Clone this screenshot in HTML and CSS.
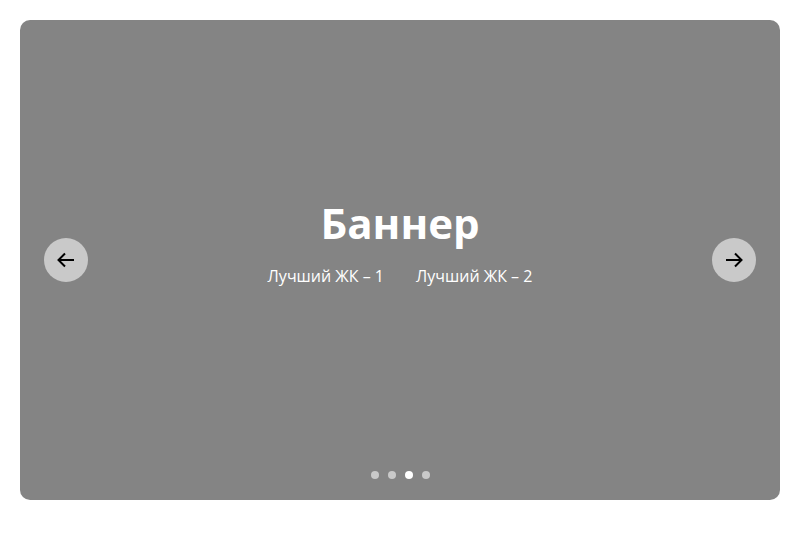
FILE: index.html
```html
<!DOCTYPE html>
<html lang="ru">
<head>
<meta charset="utf-8">
<link rel="stylesheet" href="styles.css">
</head>
<body>
<div class="page">
  <section class="banner">
    <button class="nav nav-prev" aria-label="Назад">
      <svg width="20" height="20" viewBox="0 0 20 20"><path d="M18 10H2.5M9 3.5L2.5 10L9 16.5" fill="none" stroke="#000" stroke-width="2"/></svg>
    </button>
    <div class="content">
      <h1 class="title">Баннер</h1>
      <div class="links">
        <span class="link">Лучший ЖК – 1</span>
        <span class="link">Лучший ЖК – 2</span>
      </div>
    </div>
    <button class="nav nav-next" aria-label="Вперёд">
      <svg width="20" height="20" viewBox="0 0 20 20"><path d="M2 10H17.5M11 3.5L17.5 10L11 16.5" fill="none" stroke="#000" stroke-width="2"/></svg>
    </button>
    <div class="dots">
      <span class="dot"></span>
      <span class="dot"></span>
      <span class="dot active"></span>
      <span class="dot"></span>
    </div>
  </section>
</div>
</body>
</html>
```
FILE: styles.css
```css
html, body {
  margin: 0;
  padding: 0;
  background: #fff;
}
body {
  font-family: "Open Sans", "Noto Sans", sans-serif;
}
.page {
  padding: 20px;
}
.banner {
  position: relative;
  height: 480px;
  background: #848484;
  border-radius: 10px;
  display: flex;
  align-items: center;
  justify-content: space-between;
  padding: 0 24px;
  box-sizing: border-box;
}
.nav {
  width: 44px;
  height: 44px;
  border-radius: 50%;
  border: none;
  background: #c9c9c9;
  display: flex;
  align-items: center;
  justify-content: center;
  padding: 0;
  cursor: pointer;
}
.content {
  display: flex;
  flex-direction: column;
  align-items: center;
  color: #fff;
  margin-top: -38px;
}
.title {
  margin: 0;
  font-size: 42px;
  font-weight: 700;
  line-height: 56px;
}
.links {
  display: flex;
  gap: 32px;
  font-size: 16px;
  line-height: 22px;
  margin-top: 14px;
}
.dots {
  position: absolute;
  left: 0;
  right: 0;
  bottom: 21px;
  display: flex;
  justify-content: center;
  gap: 9px;
}
.dot {
  width: 8px;
  height: 8px;
  border-radius: 50%;
  background: #c9c9c9;
}
.dot.active {
  background: #fff;
}
```
